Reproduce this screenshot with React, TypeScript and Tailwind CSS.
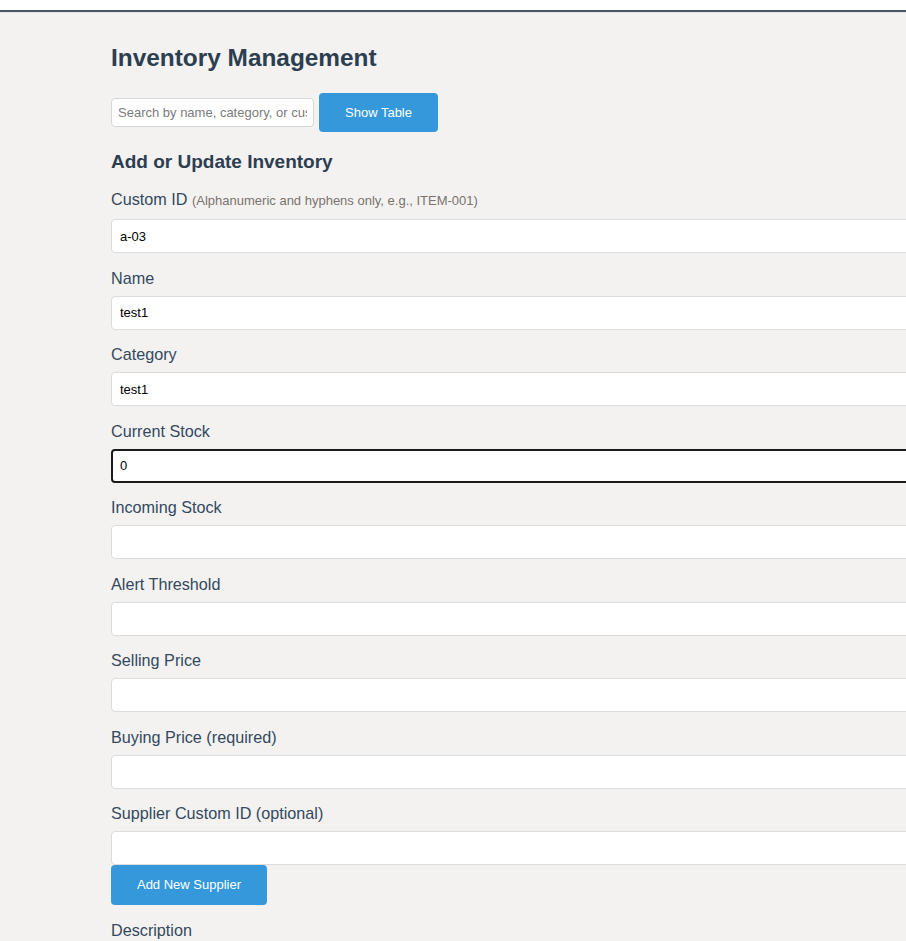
const fields = [
    { label: "Name", value: "test1" },
    { label: "Category", value: "test1" },
    { label: "Current Stock", value: "0", focused: true },
    { label: "Incoming Stock", value: "" },
    { label: "Alert Threshold", value: "" },
    { label: "Selling Price", value: "" },
    { label: "Buying Price (required)", value: "" },
];

const inputCls =
    "block w-[820px] h-[34px] px-[8px] bg-white text-[13px] font-medium text-black outline-none rounded-[4px] border border-[#dcdcdc]";

const App = () => {
    return (
        <div className="w-full min-h-screen overflow-hidden bg-[#f3f2f1] font-['Liberation_Sans',Arial,sans-serif]">
            <div className="h-[10px] bg-white" />
            <div className="h-[2px] bg-[#4a5663]" />
            <div className="h-[1px] bg-[#dfe7ec]" />

            <div className="pl-[111px] pt-[31px] pb-10">
                <h1 className="text-[24.4px] leading-[28px] font-bold text-[#2c3e50]">Inventory Management</h1>

                <div className="flex items-center gap-[5px] mt-[21px]">
                    <input
                        type="text"
                        className="w-[203px] h-[29px] px-[6px] bg-white text-[13px] outline-none rounded-[4px] border border-[#d6d6d6] placeholder:text-[#7b7b7b]"
                        placeholder="Search by name, category, or custom ID..."
                    />
                    <button className="w-[119px] h-[39px] rounded-[4px] bg-[#3498db] text-white text-[13px]">Show Table</button>
                </div>

                <h3 className="mt-[19px] text-[19px] leading-[22px] font-bold text-[#2c3e50]">Add or Update Inventory</h3>

                <form action="" className="mt-[17px]">
                    <div className="mb-[15.5px]">
                        <label className="block mb-[9px] text-[16.2px] leading-[18px] text-[#34495e]">
                            Custom ID <span className="text-[13px] text-[#7a736e]">(Alphanumeric and hyphens only, e.g., ITEM-001)</span>
                        </label>
                        <input type="text" className={inputCls} defaultValue="a-03" />
                    </div>

                    {fields.map((f) => (
                        <div key={f.label} className="mb-[15.5px]">
                            <label className="block mb-[9px] text-[16.2px] leading-[18px] text-[#34495e]">{f.label}</label>
                            <input
                                type="text"
                                defaultValue={f.value}
                                className={
                                    f.focused
                                        ? "block w-[820px] h-[34px] px-[7px] bg-white text-[13px] font-medium text-black outline-none rounded-[4px] border-2 border-[#1a1a1a]"
                                        : inputCls
                                }
                            />
                        </div>
                    ))}

                    <div>
                        <label className="block mb-[9px] text-[16.2px] leading-[18px] text-[#34495e]">Supplier Custom ID (optional)</label>
                        <input type="text" className={inputCls} />
                        <button type="button" className="w-[156px] h-[40px] rounded-[4px] bg-[#3498db] text-white text-[13px]">
                            Add New Supplier
                        </button>
                    </div>

                    <label className="block mt-[16px] text-[16.2px] leading-[18px] text-[#34495e]">Description</label>
                </form>
            </div>
        </div>
    );
};

export default App;
